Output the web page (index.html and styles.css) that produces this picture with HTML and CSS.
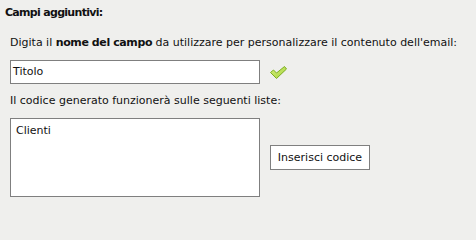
FILE: index.html
```html
<!DOCTYPE html>
<html lang="it">
<head>
<meta charset="utf-8">
<link rel="stylesheet" href="styles.css">
</head>
<body>
<div class="title">Campi aggiuntivi:</div>
<div class="panel">
  <p class="hint">Digita il <b class="strong">nome del campo</b> da utilizzare per personalizzare il contenuto dell'email:</p>
  <div class="row">
    <div class="field">Titolo</div>
    <svg class="check" width="19" height="15" viewBox="0 0 19 15">
      <defs>
        <linearGradient id="g" x1="0" y1="0" x2="1" y2="1">
          <stop offset="0" stop-color="#d6f07c"/>
          <stop offset="1" stop-color="#a6d23c"/>
        </linearGradient>
      </defs>
      <polygon points="1.5,7.5 4.5,5 7.5,8 15.5,1.5 17.5,4 7.5,13.5" fill="url(#g)" stroke="#7cae22" stroke-width="1" stroke-linejoin="round"/>
    </svg>
  </div>
  <p class="hint">Il codice generato funzionerà sulle seguenti liste:</p>
  <div class="row last">
    <div class="lists">Clienti</div>
    <button class="btn">Inserisci codice</button>
  </div>
</div>
</body>
</html>
```
FILE: styles.css
```css
html, body {
  margin: 0;
  padding: 0;
  background: #efefed;
  overflow: hidden;
}
body {
  font-family: "DejaVu Sans", Verdana, sans-serif;
  font-size: 11px;
  line-height: 14px;
  color: #111;
}
.title {
  font-weight: bold;
  letter-spacing: -0.7px;
  padding: 6px 0 0 5px;
}
.panel {
  padding: 16px 0 0 10px;
}
.hint {
  margin: 0 0 10px 0;
}
.strong {
  letter-spacing: -0.4px;
}
.row {
  display: flex;
  align-items: center;
  margin-bottom: 10px;
}
.row.last {
  margin-bottom: 0;
}
.field {
  box-sizing: border-box;
  width: 250px;
  height: 24px;
  border: 1px solid #7f7f7f;
  background: #fff;
  padding: 4px 2px;
}
.check {
  display: block;
  margin-left: 9px;
}
.lists {
  box-sizing: border-box;
  width: 250px;
  height: 79px;
  border: 1px solid #7f7f7f;
  background: #fff;
  padding: 5px 5px;
}
.btn {
  margin-left: 10px;
  box-sizing: border-box;
  width: 100px;
  height: 25px;
  background: #fff;
  border: 1px solid #7f7f7f;
  font-family: inherit;
  font-size: 11px;
  color: #111;
  padding: 0;
}
```
